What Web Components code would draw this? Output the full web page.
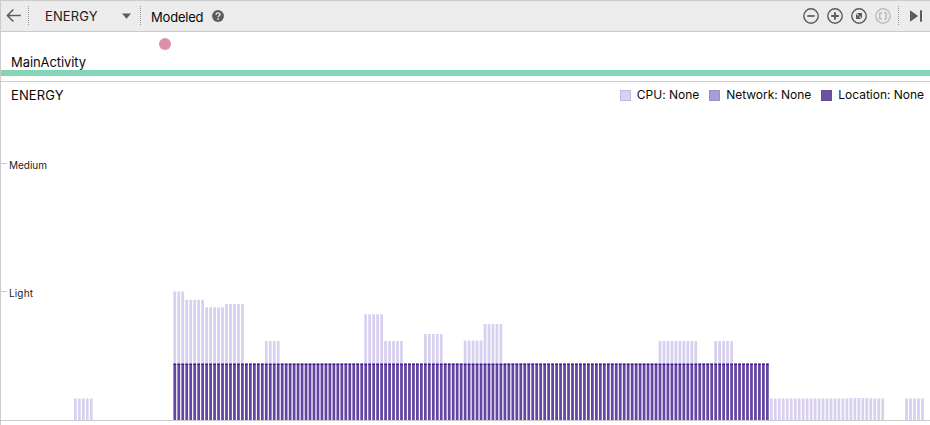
<!DOCTYPE html>
<html lang="en">
<head>
<meta charset="utf-8">
<title>Energy profiler</title>
<style>
html, body { margin: 0; height: 100%; overflow: hidden; background: #fff; }
body { font: 13px/16px Inter, "Liberation Sans", sans-serif; color: #0a0a0a; }
</style>
</head>
<body>
<energy-profiler></energy-profiler>
<script>
class BaseElement extends HTMLElement {
  constructor() {
    super();
    this.attachShadow({ mode: 'open' }).innerHTML = this.render();
  }
}

const ICONS = {
  back: '<path d="M15.8 7.5H2.6M8.4 1.5L2.4 7.5L8.4 13.5" stroke-width="1.6"/>',
  minus: '<circle cx="8" cy="8" r="7.2"/><path d="M4.3 8h7.4" stroke-width="1.7"/>',
  plus: '<circle cx="8" cy="8" r="7.2"/><path d="M4.2 8h7.6M8 4.2v7.6" stroke-width="1.9"/>',
  reset: '<circle cx="8" cy="8" r="7.2"/><path d="M5.8 5H11v5.2zM5 5.8V11h5.2z" fill="currentColor" stroke="none"/><path d="M7 9L9 7" stroke-width="1.6"/>',
  selection: '<circle cx="8" cy="8" r="7.2"/><path d="M7 5H4.8v6H7M9 5h2.2v6H9" stroke-width="1.5"/>',
  live: '<path d="M2 2.2L10.2 8L2 13.8z" fill="currentColor" stroke="none"/><path d="M13 2.2v11.6" stroke-width="2"/>',
  help: '<circle cx="8" cy="8" r="7.9" fill="currentColor" stroke="none"/><path d="M5.4 6.3C5.5 3 10.8 3.1 10.7 6.1C10.6 7.8 8.1 7.8 8.1 9.8" stroke="#ececec" stroke-width="1.8"/><circle cx="8.1" cy="12.1" r="1.2" fill="#ececec" stroke="none"/>',
  arrow: '<path d="M0 2.5H16L8 11.8z" fill="currentColor" stroke="none"/>'
};

customElements.define('tool-icon', class extends HTMLElement {
  connectedCallback() {
    const size = this.getAttribute('size') || 16;
    this.attachShadow({ mode: 'open' }).innerHTML = `<style>
      :host { display: block; flex: none; width: ${size}px; height: ${size}px; color: #5c5c5c; }
      :host([disabled]) { color: #bdbdbd; }
      svg { display: block; }
    </style><svg width="${size}" height="${size}" viewBox="0 0 16 16" fill="none" stroke="currentColor" stroke-width="1.4">${ICONS[this.getAttribute('name')]}</svg>`;
  }
});

customElements.define('dotted-separator', class extends BaseElement {
  render() {
    return `<style>:host { display: block; flex: none; width: 1px; height: 20px;
      background: repeating-linear-gradient(#949494 0 1px, transparent 1px 2px); }</style>`;
  }
});

customElements.define('profiler-toolbar', class extends BaseElement {
  render() {
    return `<style>
      :host { display: flex; box-sizing: border-box; height: 32px; background: #ececec;
        border-top: 1px solid #cbcbcb; border-bottom: 1px solid #cbcbcb; padding: 0 6px 0 4px; align-items: center; }
      .pick { display: flex; align-items: center; width: 111px; box-sizing: border-box; padding: 0 9px 0 16px; justify-content: space-between; }
      .name { margin-top: -1px; letter-spacing: 0.1px; color: #222; }
      .mode { box-sizing: border-box; width: 61px; margin: 1px 0 0 10px; letter-spacing: -0.2px; }
      .tools { display: flex; gap: 8px; margin-left: auto; align-items: center; }
      .tools dotted-separator { margin: 0 1px 0 -1px; }
    </style>
    <tool-icon name="back"></tool-icon>
    <dotted-separator style="margin-left:7px"></dotted-separator>
    <div class="pick"><span class="name">ENERGY</span><tool-icon name="arrow" size="9"></tool-icon></div>
    <dotted-separator></dotted-separator>
    <span class="mode">Modeled</span><tool-icon name="help" size="12"></tool-icon>
    <div class="tools">
      <tool-icon name="minus"></tool-icon><tool-icon name="plus"></tool-icon>
      <tool-icon name="reset"></tool-icon><tool-icon name="selection" disabled></tool-icon>
      <dotted-separator></dotted-separator><tool-icon name="live"></tool-icon>
    </div>`;
  }
});

customElements.define('activity-track', class extends BaseElement {
  render() {
    return `<style>
      :host { display: flex; flex-direction: column; box-sizing: border-box; height: 50px; border-bottom: 1px solid #cbcbcb; }
      .event { width: 12px; height: 12px; border-radius: 50%; background: #da91ae; margin: 6px 0 0 158px; }
      .name { margin: 4px 0 0 10px; height: 16px; letter-spacing: -0.08px; }
      .bar { height: 6px; background: #82d5b7; }
    </style><div class="event"></div><div class="name"><slot></slot></div><div class="bar"></div>`;
  }
});

customElements.define('legend-item', class extends BaseElement {
  render() {
    return `<style>
      :host { display: flex; align-items: center; }
      i { box-sizing: border-box; width: 11px; height: 11px; background: var(--swatch); border: 1px solid rgba(70,50,110,.14); margin-right: 6px; }
      span { font-size: 12px; letter-spacing: -0.02px; white-space: nowrap; }
    </style><i></i><span><slot></slot></span>`;
  }
});

customElements.define('energy-chart', class extends BaseElement {
  render() {
    const first = 174.8, pitch = 3.977, width = 2.75, base = 420;
    // [first bar, last bar, top] for each run of equal CPU readings
    const cpu = [[-25,-21,398.5],[0,2,291.4],[3,7,299.8],[8,12,307.3],[13,17,304.1],[23,26,341],[48,52,314.3],
      [53,57,341],[63,67,334],[73,77,340.4],[78,82,324],[122,131,341],[136,140,341],
      [150,169,398.4],[170,174,398],[175,178,398.4],[184,188,398.4]];
    const bar = (k, top, bottom) => {
      const x = first + k * pitch - width / 2;
      return `M${x.toFixed(2)} ${top}h${width}V${bottom}h${-width}z`;
    };
    let light = '', dark = '', caps = '';
    for (const [a, b, top] of cpu)
      for (let k = a; k <= b; k++) light += bar(k, top, k >= 0 && k < 150 ? 363 : base);
    for (let k = 0; k < 150; k++) { dark += bar(k, 363.3, base); caps += bar(k, 364, 365); }
    return `<style>
      :host { display: block; height: 343px; position: relative; }
      header { display: flex; justify-content: space-between; align-items: center; height: 26px; padding: 0 6px 0 10px; }
      header > span { letter-spacing: 0.1px; }
      .legend { display: flex; gap: 10px; }
      svg { position: absolute; left: -1px; top: -82px; }
      text { font-size: 10px; fill: #222; }
    </style>
    <svg width="930" height="425" viewBox="0 0 930 425">
      <path d="M1 163.5h6M1 291.5h6" stroke="#cbcbcb"/>
      <text x="9" y="168.5" textLength="38">Medium</text>
      <text x="9" y="296.5" textLength="24">Light</text>
      <path d="${light}" fill="#d8d0ef"/><path d="${dark}" fill="#6345a3"/><path d="${caps}" fill="#43148d"/>
      <path d="M1 420.5h929" stroke="#cbcbcb"/>
    </svg>
    <header><span>ENERGY</span><div class="legend">
      <legend-item style="--swatch:#d8d0ef">CPU: None</legend-item>
      <legend-item style="--swatch:#ab9bd6">Network: None</legend-item>
      <legend-item style="--swatch:#6b52a2">Location: None</legend-item>
    </div></header>`;
  }
});

customElements.define('energy-profiler', class extends BaseElement {
  render() {
    return `<style>
      :host { display: block; box-sizing: border-box; width: 930px; height: 425px; border-left: 1px solid #cbcbcb; }
    </style>
    <profiler-toolbar></profiler-toolbar>
    <activity-track>MainActivity</activity-track>
    <energy-chart></energy-chart>`;
  }
});
</script>
</body>
</html>
